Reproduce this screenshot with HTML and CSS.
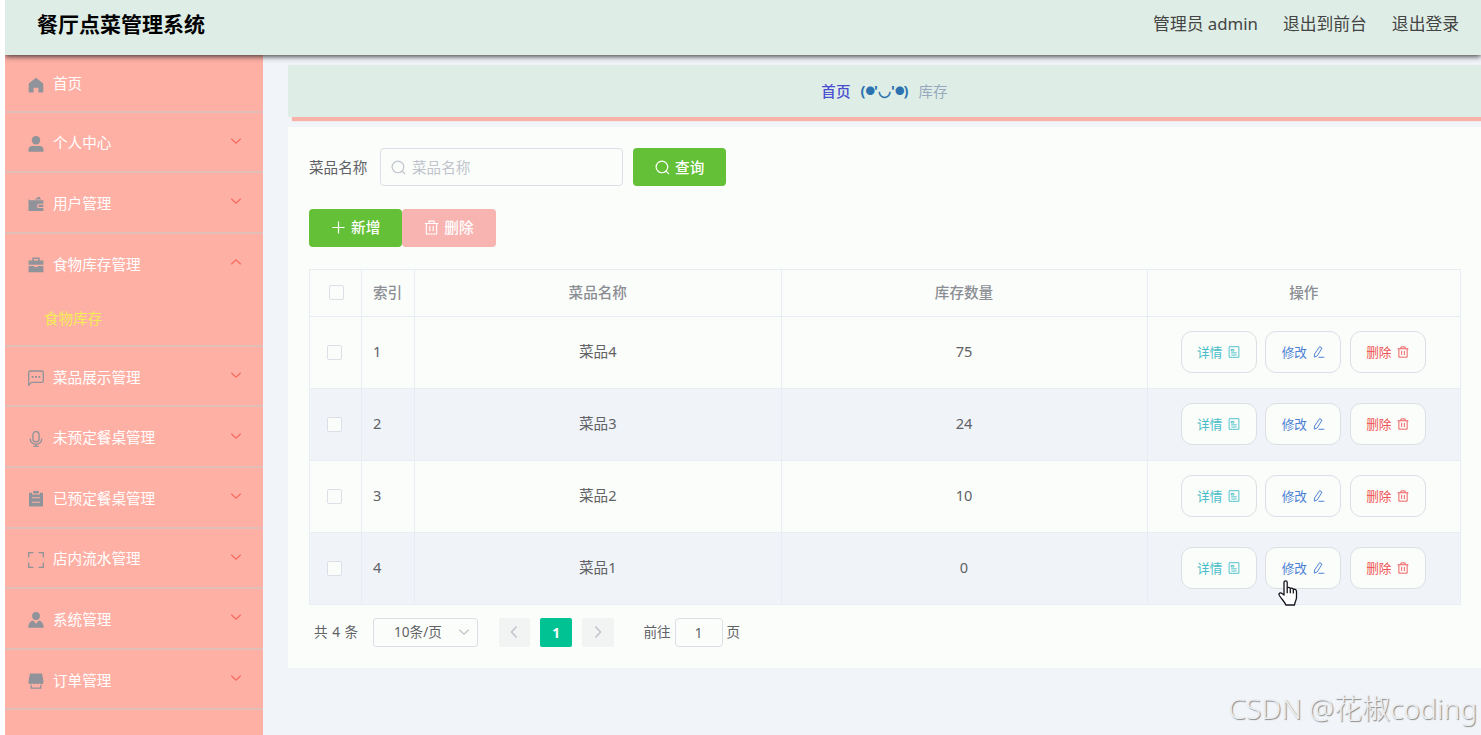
FILE: index.html
```html
<!DOCTYPE html>
<html lang="zh-CN">
<head>
  <meta charset="UTF-8">
  <meta name="viewport" content="width=device-width, initial-scale=1.0">
  <title>餐厅点菜管理系统</title>
  <link rel="stylesheet" href="styles.css">
</head>
<body>
  <!-- 图标 -->
  <svg class="sprite" width="0" height="0">
    <symbol id="i-home" viewBox="0 0 16 16"><path fill="currentColor" d="M8 .8 15.300 6.500v8.900h-4.900v-4.600H5.600v4.600H.7V6.500z"/></symbol>
    <symbol id="i-user" viewBox="0 0 16 16"><circle cx="8" cy="4.3" r="4.200" fill="currentColor"/><path fill="currentColor" d="M.5 15.800v-2.200c0-2.400 1.600-3.700 3.800-3.700h7.400c2.200 0 3.800 1.300 3.800 3.700v2.200z"/></symbol>
    <symbol id="i-wallet" viewBox="0 0 16 16"><path fill="currentColor" d="M6.4 3.6 11 .4l2.3 3.2z"/><path fill="currentColor" d="M.5 2.9 2 4.3h13.4v3.4h-4.2a2 2 0 0 0 0 4.4h4.2v3H.5z"/><path fill="currentColor" d="M11.4 8.800h4v2.200h-4a1.100 1.100 0 0 1 0-2.200z"/></symbol>
    <symbol id="i-case" viewBox="0 0 16 16"><path fill="currentColor" fill-rule="evenodd" d="M4.300 3.400V.5h7.400v2.900h3.700v4.400H.6V3.400zm1.500 0h4.400V2H5.800z"/><path fill="currentColor" d="M.6 9h5.800v1h3.200V9h5.800v6.200H.6z"/></symbol>
    <symbol id="i-chat" viewBox="0 0 16 16"><path fill="none" stroke="currentColor" stroke-width="1.300" d="M.7 15.300V2.700Q.7 1 2.400 1h11.200q1.700 0 1.700 1.700v8q0 1.700-1.700 1.700H3.400z"/><path fill="currentColor" d="M3.600 6h1.900v1.700H3.600zM7 6h1.900v1.700H7zM10.400 6h1.900v1.700h-1.900z"/></symbol>
    <symbol id="i-mic" viewBox="0 0 16 16"><rect x="4.900" y=".6" width="6.200" height="10.200" rx="3.100" fill="none" stroke="currentColor" stroke-width="1.300"/><path fill="none" stroke="currentColor" stroke-width="1.300" d="M2.300 7.500v1a5.700 4.700 0 0 0 11.400 0v-1M8 13v2.500M5.300 15.400h5.400"/></symbol>
    <symbol id="i-order" viewBox="0 0 16 16"><path fill="currentColor" fill-rule="evenodd" d="M1 1.800h3v1.700h8V1.800h3v13.800H1zM4 6.200v1h8v-1zm0 4.500v1h8v-1z"/><path fill="currentColor" d="M5.200 0h5.600v2.500H5.200z"/></symbol>
    <symbol id="i-full" viewBox="0 0 16 16"><path fill="none" stroke="currentColor" stroke-width="1.300" d="M.7 5.500V.7h4.800M10.500.7h4.800v4.800M15.300 10.500v4.800h-4.800M5.500 15.300H.7v-4.800"/></symbol>
    <symbol id="i-custom" viewBox="0 0 16 16"><circle cx="8" cy="4" r="3.900" fill="currentColor"/><path fill="currentColor" d="M.3 15.700C.5 11 2.600 9 5.200 8.600L8 11.700l2.800-3.100c2.600.4 4.700 2.400 4.900 7.100z"/></symbol>
    <symbol id="i-shop" viewBox="0 0 16 16"><path fill="currentColor" d="M1.900.5h12.200l1.400 8q0 2.800-1.900 2.800-1.300 0-1.900-1.100-.5 1.100-1.800 1.100T8 10.200q-.6 1.100-1.900 1.100t-1.800-1.100q-.6 1.100-1.900 1.100Q.5 11.300.5 8.500z"/><path fill="none" stroke="currentColor" stroke-width="1.300" d="M3.200 12v3.200h9.600V12"/></symbol>
    <symbol id="i-down" viewBox="0 0 12 12"><path fill="none" stroke="currentColor" stroke-width="1.300" d="M1.300 3.800 6 8.200l4.700-4.400"/></symbol>
    <symbol id="i-search" viewBox="0 0 16 16"><circle cx="7.400" cy="7.400" r="6.200" fill="none" stroke="currentColor" stroke-width="1.300"/><path stroke="currentColor" stroke-width="1.300" d="m11.800 11.800 3.200 3.200"/></symbol>
    <symbol id="i-plus" viewBox="0 0 16 16"><path stroke="currentColor" stroke-width="1.300" d="M8 1.500v13M1.500 8h13"/></symbol>
    <symbol id="i-trash" viewBox="0 0 16 16"><path fill="none" stroke="currentColor" stroke-width="1.200" d="M.8 3.700h14.400M5.200 3.500V1.200h5.600v2.300M2.500 3.700v11.200h11V3.700M6.200 6.500v5.400M9.800 6.500v5.400"/></symbol>
    <symbol id="i-doc" viewBox="0 0 16 16"><path fill="none" stroke="currentColor" stroke-width="1.200" d="M1.500.9h13v14.200h-13zM4.300 4.500h3.400v2.200H4.300zM4.300 9.100h7.400M4.300 12h7.400"/></symbol>
    <symbol id="i-edit" viewBox="0 0 16 16"><path fill="none" stroke="currentColor" stroke-width="1.300" d="M8.800.9 12 2.800 5.600 13.200l-3.800 1.700.3-4.200zM7.300 15H15"/></symbol>
  </svg>

  <div class="app">
    <div class="header">
      <h1 class="title">餐厅点菜管理系统</h1>
      <div class="nav">
        <span>管理员 admin</span>
        <a href="javascript:;">退出到前台</a>
        <a href="javascript:;">退出登录</a>
      </div>
    </div>

    <div class="container">
      <ul class="menu">
        <li class="item first"><svg class="icon"><use href="#i-home"/></svg><span>首页</span></li>
        <li class="item"><svg class="icon"><use href="#i-user"/></svg><span>个人中心</span><svg class="arrow"><use href="#i-down"/></svg></li>
        <li class="item"><svg class="icon"><use href="#i-wallet"/></svg><span>用户管理</span><svg class="arrow"><use href="#i-down"/></svg></li>
        <li class="item open"><svg class="icon"><use href="#i-case"/></svg><span>食物库存管理</span><svg class="arrow"><use href="#i-down"/></svg></li>
        <li class="sub">食物库存</li>
        <li class="item"><svg class="icon"><use href="#i-chat"/></svg><span>菜品展示管理</span><svg class="arrow"><use href="#i-down"/></svg></li>
        <li class="item"><svg class="icon"><use href="#i-mic"/></svg><span>未预定餐桌管理</span><svg class="arrow"><use href="#i-down"/></svg></li>
        <li class="item"><svg class="icon"><use href="#i-order"/></svg><span>已预定餐桌管理</span><svg class="arrow"><use href="#i-down"/></svg></li>
        <li class="item"><svg class="icon"><use href="#i-full"/></svg><span>店内流水管理</span><svg class="arrow"><use href="#i-down"/></svg></li>
        <li class="item"><svg class="icon"><use href="#i-custom"/></svg><span>系统管理</span><svg class="arrow"><use href="#i-down"/></svg></li>
        <li class="item"><svg class="icon"><use href="#i-shop"/></svg><span>订单管理</span><svg class="arrow"><use href="#i-down"/></svg></li>
      </ul>

      <div class="main">
        <div class="breadcrumb">
          <a href="javascript:;">首页</a>
          <b class="face">(<i>●</i>'◡'<i>●</i>)</b>
          <span>库存</span>
        </div>

        <div class="card">
          <div class="search">
            <label>菜品名称</label>
            <div class="input"><svg class="ico"><use href="#i-search"/></svg><span>菜品名称</span></div>
            <div class="btn green"><svg class="ico"><use href="#i-search"/></svg><span>查询</span></div>
          </div>
          <div class="tools">
            <div class="btn green"><svg class="ico"><use href="#i-plus"/></svg><span>新增</span></div>
            <div class="btn pink"><svg class="ico"><use href="#i-trash"/></svg><span>删除</span></div>
          </div>

          <div class="table">
            <div class="row head">
              <div><i class="check"></i></div><div>索引</div><div>菜品名称</div><div>库存数量</div><div>操作</div>
            </div>
            <div class="row">
              <div><i class="check"></i></div><div>1</div><div>菜品4</div><div>75</div>
              <div class="actions">
                <span class="act detail">详情<svg><use href="#i-doc"/></svg></span>
                <span class="act edit">修改<svg><use href="#i-edit"/></svg></span>
                <span class="act del">删除<svg><use href="#i-trash"/></svg></span>
              </div>
            </div>
            <div class="row stripe">
              <div><i class="check"></i></div><div>2</div><div>菜品3</div><div>24</div>
              <div class="actions">
                <span class="act detail">详情<svg><use href="#i-doc"/></svg></span>
                <span class="act edit">修改<svg><use href="#i-edit"/></svg></span>
                <span class="act del">删除<svg><use href="#i-trash"/></svg></span>
              </div>
            </div>
            <div class="row">
              <div><i class="check"></i></div><div>3</div><div>菜品2</div><div>10</div>
              <div class="actions">
                <span class="act detail">详情<svg><use href="#i-doc"/></svg></span>
                <span class="act edit">修改<svg><use href="#i-edit"/></svg></span>
                <span class="act del">删除<svg><use href="#i-trash"/></svg></span>
              </div>
            </div>
            <div class="row stripe">
              <div><i class="check"></i></div><div>4</div><div>菜品1</div><div>0</div>
              <div class="actions">
                <span class="act detail">详情<svg><use href="#i-doc"/></svg></span>
                <span class="act edit">修改<svg><use href="#i-edit"/></svg></span>
                <span class="act del">删除<svg><use href="#i-trash"/></svg></span>
              </div>
            </div>
          </div>

          <div class="pagination">
            <span class="total">共 4 条</span>
            <div class="size"><span>10条/页</span><svg><use href="#i-down"/></svg></div>
            <div class="page prev"><svg><use href="#i-down"/></svg></div>
            <div class="page current">1</div>
            <div class="page next"><svg><use href="#i-down"/></svg></div>
            <span class="jump">前往</span>
            <div class="num">1</div>
            <span>页</span>
          </div>
        </div>
      </div>
    </div>
  </div>

  <!-- 鼠标指针 -->
  <svg class="cursor" viewBox="0 0 20 26"><path fill="#fff" stroke="#14141c" stroke-width="1.300" stroke-linejoin="round" d="M6 15V2.500C6 .3 9.200.3 9.200 2.500v6c.3-1.700 3.100-1.500 3.100.5.600-1.400 3-1 3 .9.700-1.200 3.200-.6 3.200 1.500v6.100c0 3-1.700 4.300-2 7.500H7.800c-.5-2.600-4-5.500-6.400-9.500-1.200-2.200 1.200-3.500 2.600-2zM9.200 8.500v4.700M12.300 9.500v3.700M15.300 10.500v3"/></svg>
  <div class="watermark">CSDN @花椒coding</div>
</body>
</html>
```
FILE: styles.css
```css
*{
  box-sizing: border-box;
}

body{
  margin: 0;
  height: 735px;
  overflow: hidden;
  background-color: #fff;
  font-family: "Noto Sans", "Noto Sans CJK SC", sans-serif;
  font-size: 14.6px;
  color: #606266;
}

a{
  color: inherit;
  text-decoration: none;
}

ul{
  padding: 0;
  margin: 0;
  list-style: none;
}

.sprite{
  display: block;
}

.app{
  height: 735px;
  margin-left: 5px;
  display: flex;
  flex-direction: column;
  overflow: hidden;
  background-color: #f1f5f9;
}

/* 顶部 */
.header{
  position: relative;
  z-index: 2;
  flex: none;
  height: 55px;
  padding: 0 22px 7px 32px;
  display: flex;
  align-items: center;
  justify-content: space-between;
  background-color: #deeee6;
  box-shadow: 0 1px 6px #222;
}

.title{
  margin: 0;
  font-size: 21px;
  line-height: 30px;
  font-weight: bold;
  color: #000;
}

.nav{
  padding-bottom: 2px;
  display: flex;
  gap: 25px;
  font-size: 16.8px;
  color: #444;
}

.container{
  flex: 1;
  min-height: 0;
  display: flex;
}

/* 左侧菜单 */
.menu{
  flex: none;
  width: 258px;
  background-color: #ffb0a5;
  color: #fff;
}

.item{
  height: 60.6px;
  padding: 0 21px 0 22.5px;
  display: flex;
  align-items: center;
  border-bottom: 2px solid #e2beb8;
}

.item.first{
  height: 57.6px;
}

.item.open{
  border-bottom-color: transparent;
}

.item span{
  margin-left: 9.5px;
}

.item.first span{
  padding-bottom: 1px;
}

.item .icon{
  width: 16px;
  height: 16px;
  margin-top: 4px;
  color: #909399;
}

.item .arrow{
  width: 12px;
  height: 12px;
  margin-left: auto;
  margin-bottom: 2px;
  color: #f56c61;
}

.item.open .arrow{
  transform: rotate(180deg);
}

.sub{
  height: 52.4px;
  padding-left: 39px;
  line-height: 48px;
  color: #f3ec55;
  border-bottom: 2px solid #e2beb8;
}

/* 右侧内容 */
.main{
  flex: 1;
  padding: 10px 0 0 25px;
}

.breadcrumb{
  height: 52px;
  margin-bottom: 10px;
  padding-bottom: 2px;
  display: flex;
  align-items: center;
  justify-content: center;
  gap: 10px;
  background-color: #deeee6;
  box-shadow: 4px 4px 1px #f8b3a8;
  color: #97a8be;
}

.breadcrumb a{
  color: #4a4fd0;
  font-weight: 500;
}

.breadcrumb .face{
  display: flex;
  align-items: center;
  color: #2c72b0;
}

.face i{
  width: 8.6px;
  font-size: 9.5px;
  font-style: normal;
}

.card{
  height: 540.5px;
  padding: 21px 20px 0 21px;
  background-color: #fbfdfa;
}

.search{
  display: flex;
  align-items: center;
}

.search label,
.input span,
.btn span{
  padding-bottom: 2px;
}

.input{
  width: 243px;
  height: 38px;
  margin: 0 10px 0 12.6px;
  padding-left: 10px;
  display: flex;
  align-items: center;
  gap: 6px;
  border: 1px solid #dcdfe6;
  border-radius: 4px;
  color: #c0c4cc;
}

.ico{
  width: 15px;
  height: 15px;
}

.tools{
  margin: 22.5px 0 22.5px;
  display: flex;
}

.btn{
  width: 93.3px;
  height: 38px;
  display: flex;
  align-items: center;
  justify-content: center;
  gap: 5px;
  border-radius: 4px;
  color: #fff;
  font-weight: 500;
}

.green{
  background-color: #64c037;
}

.pink{
  background-color: #f7b4b1;
}

/* 表格 */
.table{
  width: 1152px;
  border: 1px solid #e8ecf3;
  border-bottom: 0;
}

.row{
  height: 72px;
  display: grid;
  grid-template-columns: 52px 53px 366.5px 366px 1fr;
  border-bottom: 1px solid #e8ecf3;
}

.row > div{
  padding-bottom: 3px;
  display: flex;
  align-items: center;
  justify-content: center;
  border-right: 1px solid #e8ecf3;
}

.row > div:last-child{
  border-right: 0;
}

.row > div:nth-child(1){
  padding: 0 2px 0 0;
}

.row > div:nth-child(2){
  justify-content: flex-start;
  padding-left: 11px;
}

.row.head{
  height: 46.5px;
  color: #8b8e94;
  font-weight: 500;
}

.row.head > div:nth-child(1){
  padding: 0 0 0 2px;
}

.stripe{
  background-color: #f0f4f8;
}

.check{
  width: 15px;
  height: 15px;
  border: 1px solid #dcdfe6;
  border-radius: 2px;
  background-color: #fbfdfa;
}

.row .actions{
  padding: 0 1px 0 0;
  gap: 8.6px;
}

.act{
  width: 76px;
  height: 42px;
  padding-bottom: 1px;
  display: flex;
  align-items: center;
  justify-content: center;
  gap: 6px;
  border: 1px solid #dcdfe6;
  border-radius: 11px;
  background-color: #fbfdfa;
  font-size: 12.6px;
}

.act svg{
  width: 12px;
  height: 12px;
}

.detail{
  color: #45bcc8;
}

.edit{
  color: #4b80d5;
}

.del{
  color: #f05050;
}

/* 分页 */
.pagination{
  margin-top: 13px;
  padding-left: 5px;
  display: flex;
  align-items: center;
  font-size: 13.6px;
}

.pagination span{
  padding-bottom: 3px;
}

.total{
  width: 59px;
  word-spacing: 1px;
}

.size{
  width: 105px;
  height: 29px;
  margin-right: 20.5px;
  padding: 0 7px 0 20px;
  display: flex;
  align-items: center;
  justify-content: space-between;
  border: 1px solid #dcdfe6;
  border-radius: 3px;
}

.pagination svg{
  width: 12px;
  height: 12px;
  color: #c0c4cc;
}

.page{
  width: 31.5px;
  height: 29px;
  margin-right: 10.3px;
  display: flex;
  align-items: center;
  justify-content: center;
  border-radius: 2px;
  background-color: #f2f3f3;
}

.current{
  background-color: #00c292;
  color: #fff;
  font-weight: bold;
}

.pagination .prev svg,
.pagination .next svg{
  width: 14px;
  height: 14px;
  transform: rotate(90deg);
}

.pagination .next svg{
  transform: rotate(-90deg);
}

.jump{
  margin-left: 19.5px;
}

.num{
  width: 48px;
  height: 29px;
  margin: 0 4px;
  line-height: 27px;
  text-align: center;
  border: 1px solid #dcdfe6;
  border-radius: 4px;
}

.cursor{
  position: absolute;
  left: 1278px;
  top: 580px;
  width: 20px;
  height: 26px;
}

.watermark{
  position: absolute;
  right: 4px;
  bottom: 7px;
  font-size: 28.1px;
  line-height: 40px;
  font-weight: 300;
  color: #eceef0;
  text-shadow: 1px 1px 1px #888;
}
```
